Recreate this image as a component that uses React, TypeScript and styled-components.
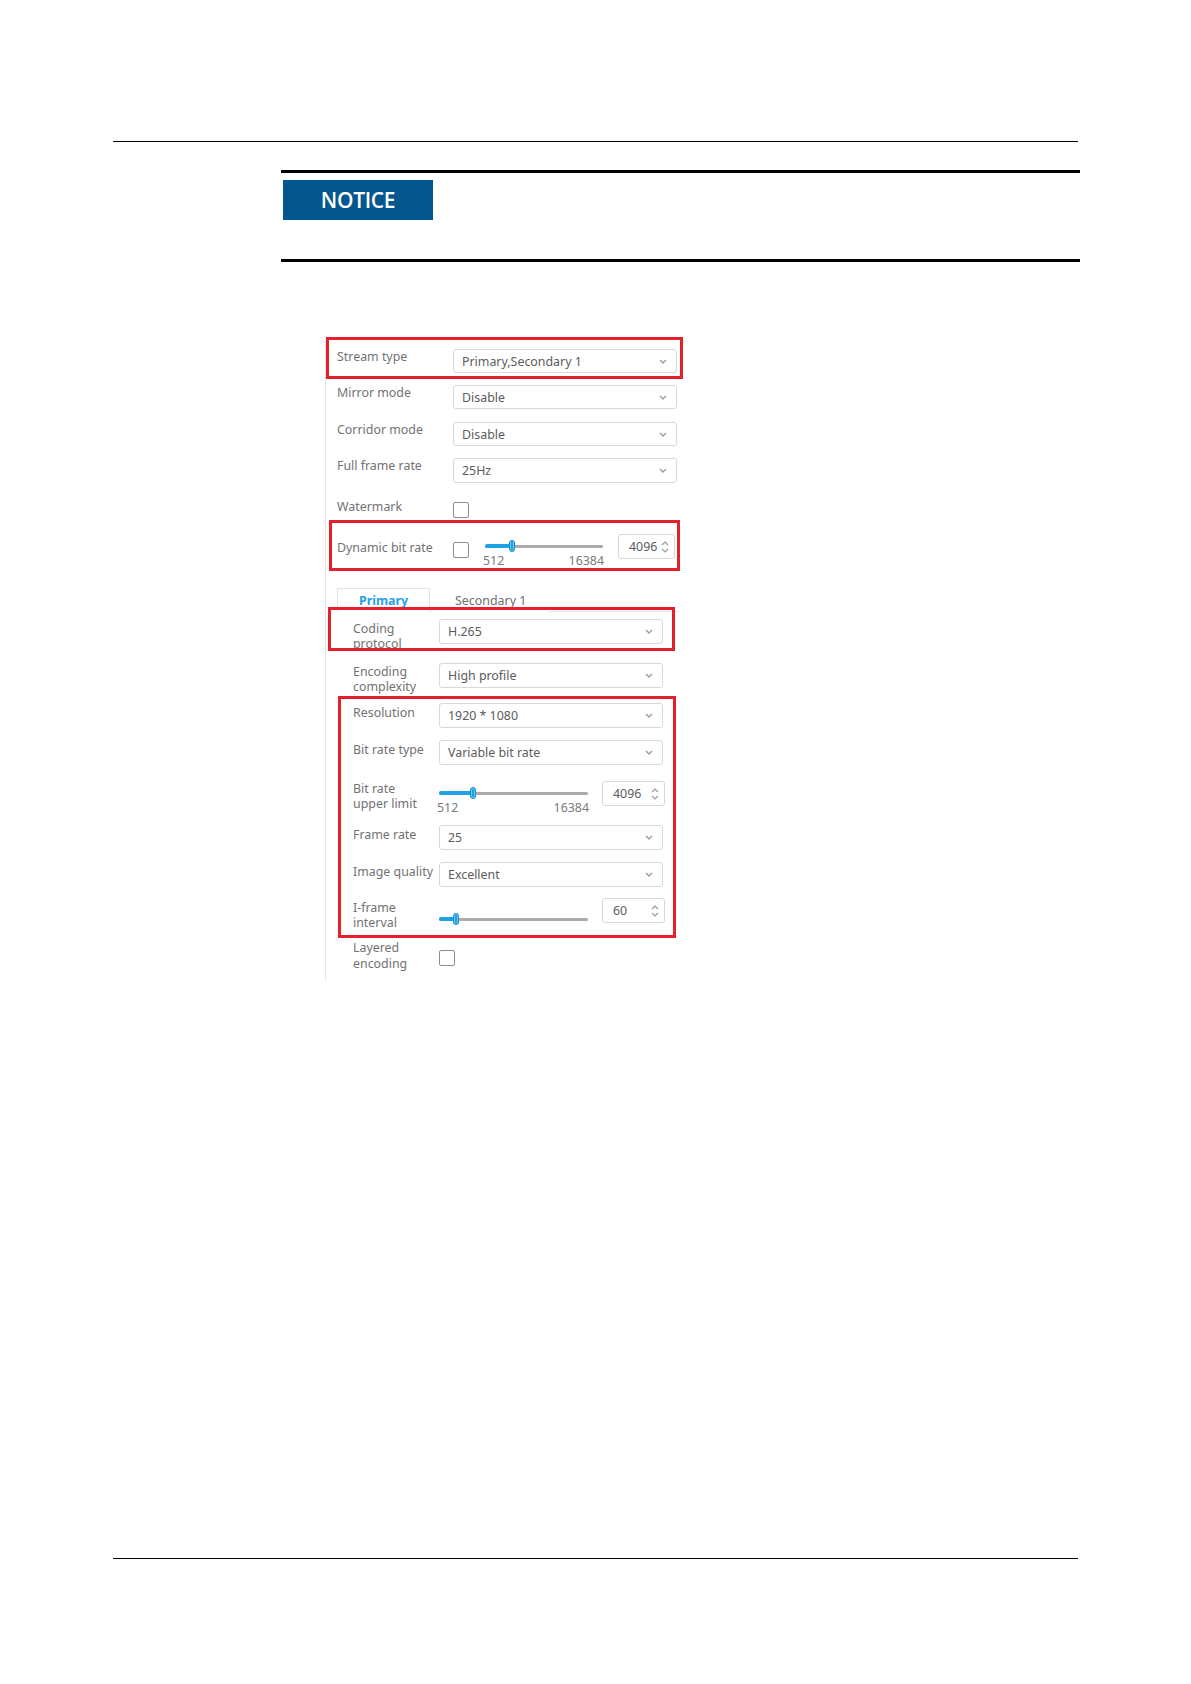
import styled, { createGlobalStyle } from 'styled-components'

const GlobalStyle = createGlobalStyle`
    html, body {
        margin: 0;
        padding: 0;
        background: #fff;
    }
    body {
        font-family: 'Noto Sans', 'Open Sans', sans-serif;
    }
`

const Page = styled.div`
    width: 1191px;
    min-height: 1684px;
    display: flex;
    flex-direction: column;
    background: #fff;
`

const HeaderRule = styled.div`
    margin: 141px 0 0 113px;
    width: 965px;
    border-top: 1px solid #000;
`

const FooterRule = styled.div`
    margin: auto 0 125px 113px;
    width: 965px;
    border-top: 1px solid #000;
`

const Notice = styled.section`
    margin: 28px 0 0 281px;
    width: 797px;
    border-top: 3px solid #000;
    border-bottom: 3px solid #000;
    padding: 7px 0 39px 2px;
`

const NoticeTag = styled.div`
    width: 150px;
    height: 40px;
    background: #04568f;
    color: #fff;
    font-family: 'Open Sans', 'Noto Sans', sans-serif;
    font-size: 21px;
    font-weight: 600;
    letter-spacing: -0.3px;
    display: flex;
    align-items: center;
    justify-content: center;
`

/* screenshot of the encoder settings */
const Figure = styled.div`
    position: relative;
    margin: 75px 0 0 325px;
    width: 360px;
`

const Panel = styled.div`
    border-left: 1px solid #e6e6e6;
    padding: 12px 0 0 11px;
    height: 643px;
    box-sizing: border-box;
    font-size: 12.4px;
`

const Row = styled.div<{ $h: number }>`
    display: flex;
    align-items: flex-start;
    height: ${({ $h }) => $h}px;
`

const Label = styled.div<{ $w: number; $pt?: number; $lh?: number }>`
    width: ${({ $w }) => $w}px;
    flex: none;
    padding-top: ${({ $pt }) => $pt ?? 0}px;
    line-height: ${({ $lh }) => $lh ?? 16}px;
    color: #727272;
    white-space: nowrap;
`

const SelectBox = styled.div<{ $h?: number }>`
    width: 224px;
    height: ${({ $h }) => $h ?? 25}px;
    box-sizing: border-box;
    border: 1px solid #d8d8d8;
    border-radius: 3px;
    display: flex;
    align-items: center;
    justify-content: space-between;
    padding: 0 9px 0 8px;
    color: #5c5c5c;
    background: #fff;
`

const CheckBox = styled.div<{ $mt: number }>`
    width: 16px;
    height: 16px;
    box-sizing: border-box;
    margin-top: ${({ $mt }) => $mt}px;
    border: 1px solid #8c8c8c;
    border-radius: 2px;
    flex: none;
`

const SliderWrap = styled.div<{ $w: number; $mt: number; $ml?: number }>`
    width: ${({ $w }) => $w}px;
    margin-top: ${({ $mt }) => $mt}px;
    margin-left: ${({ $ml }) => $ml ?? 0}px;
    flex: none;
`

const Track = styled.div`
    position: relative;
    height: 12px;
`

const Rail = styled.div`
    position: absolute;
    left: 0;
    right: 0;
    top: 5px;
    height: 3px;
    background: #ababab;
    border-radius: 2px;
`

const Fill = styled.div`
    position: absolute;
    left: 0;
    top: 4px;
    height: 4px;
    background: #1ea1e6;
    border-radius: 2px;
`

const Thumb = styled.div`
    position: absolute;
    top: 0;
    width: 6px;
    height: 12px;
    box-sizing: border-box;
    transform: translateX(-50%);
    background: #1ea1e6;
    border: 1px solid #1690d4;
    border-radius: 3px;
    box-shadow: inset 0 0 0 1px #6cc6f2;
`

const Ticks = styled.div`
    display: flex;
    justify-content: space-between;
    margin: 2px -1px 0 -2px;
    line-height: 14px;
    color: #7a7a7a;
`

const NumberBox = styled.div<{ $w: number; $ml: number }>`
    width: ${({ $w }) => $w}px;
    height: 25px;
    box-sizing: border-box;
    margin-left: ${({ $ml }) => $ml}px;
    border: 1px solid #d8d8d8;
    border-radius: 3px;
    display: flex;
    align-items: center;
    padding: 0 5px 0 10px;
    color: #5c5c5c;
    flex: none;

    svg {
        margin-left: auto;
    }
`

const TabSection = styled.div`
    margin-top: 0;
`

const TabBar = styled.div`
    display: flex;
    gap: 3px;
    height: 23px;
    border-bottom: 1px solid #e8e8e8;
    margin-right: 6px;
`

const Tab = styled.div<{ $active?: boolean }>`
    padding: 0 21px;
    display: flex;
    align-items: center;
    box-sizing: border-box;
    height: 24px;
    background: #fff;
    border: 1px solid ${({ $active }) => ($active ? '#e3e3e3' : 'transparent')};
    border-bottom: none;
    color: ${({ $active }) => ($active ? '#22a2e8' : '#6e6e6e')};
    font-weight: ${({ $active }) => ($active ? 700 : 400)};
`

const TabBody = styled.div`
    padding: 7px 0 0 16px;
`

const Callout = styled.div<{ $x: number; $y: number; $w: number; $h: number }>`
    position: absolute;
    left: ${({ $x }) => $x}px;
    top: ${({ $y }) => $y}px;
    width: ${({ $w }) => $w}px;
    height: ${({ $h }) => $h}px;
    box-sizing: border-box;
    border: 3px solid #e3202c;
    pointer-events: none;
`

const Chevron = () => (
    <svg width="8" height="5" viewBox="0 0 8 5">
        <polyline points="1,1 4,4 7,1" fill="none" stroke="#9a9a9a" strokeWidth="1.3" />
    </svg>
)

const Spinner = () => (
    <svg width="8" height="14" viewBox="0 0 8 14">
        <polyline points="1,5 4,2 7,5" fill="none" stroke="#9a9a9a" strokeWidth="1.2" />
        <polyline points="1,9 4,12 7,9" fill="none" stroke="#9a9a9a" strokeWidth="1.2" />
    </svg>
)

const Select = ({ value, h }: { value: string; h?: number }) => (
    <SelectBox $h={h}>
        <span>{value}</span>
        <Chevron />
    </SelectBox>
)

const Slider = ({
    w,
    mt,
    ml,
    pos,
    ticks,
}: {
    w: number
    mt: number
    ml?: number
    pos: number
    ticks?: boolean
}) => (
    <SliderWrap $w={w} $mt={mt} $ml={ml}>
        <Track>
            <Rail />
            <Fill style={{ width: `${pos * 100}%` }} />
            <Thumb style={{ left: `${pos * 100}%` }} />
        </Track>
        {ticks && (
            <Ticks>
                <span>512</span>
                <span>16384</span>
            </Ticks>
        )}
    </SliderWrap>
)

const Spin = ({ value, w, ml }: { value: string; w: number; ml: number }) => (
    <NumberBox $w={w} $ml={ml}>
        <span>{value}</span>
        <Spinner />
    </NumberBox>
)

const bitPos = (4096 - 512) / (16384 - 512)

export default function App() {
    return (
        <Page>
            <GlobalStyle />
            <HeaderRule />
            <Notice>
                <NoticeTag>NOTICE</NoticeTag>
            </Notice>

            <Figure>
                <Panel>
                    <Row $h={36}>
                        <Label $w={116}>Stream type</Label>
                        <Select value="Primary,Secondary 1" h={24} />
                    </Row>
                    <Row $h={37}>
                        <Label $w={116}>Mirror mode</Label>
                        <Select value="Disable" h={24} />
                    </Row>
                    <Row $h={36}>
                        <Label $w={116}>Corridor mode</Label>
                        <Select value="Disable" h={24} />
                    </Row>
                    <Row $h={41}>
                        <Label $w={116}>Full frame rate</Label>
                        <Select value="25Hz" h={25} />
                    </Row>
                    <Row $h={35}>
                        <Label $w={116}>Watermark</Label>
                        <CheckBox $mt={3} />
                    </Row>
                    <Row $h={54}>
                        <Label $w={116} $pt={6}>
                            Dynamic bit rate
                        </Label>
                        <CheckBox $mt={8} />
                        <Slider w={118} mt={6} ml={16} pos={bitPos} ticks />
                        <Spin value="4096" w={57} ml={15} />
                    </Row>

                    <TabSection>
                        <TabBar>
                            <Tab $active>Primary</Tab>
                            <Tab>Secondary 1</Tab>
                        </TabBar>
                        <TabBody>
                            <Row $h={44}>
                                <Label $w={86} $pt={2} $lh={15}>
                                    Coding
                                    <br />
                                    protocol
                                </Label>
                                <Select value="H.265" />
                            </Row>
                            <Row $h={40}>
                                <Label $w={86} $pt={1} $lh={15}>
                                    Encoding
                                    <br />
                                    complexity
                                </Label>
                                <Select value="High profile" />
                            </Row>
                            <Row $h={37}>
                                <Label $w={86} $pt={2} $lh={15}>
                                    Resolution
                                </Label>
                                <Select value="1920 * 1080" />
                            </Row>
                            <Row $h={41}>
                                <Label $w={86} $pt={2} $lh={15}>
                                    Bit rate type
                                </Label>
                                <Select value="Variable bit rate" />
                            </Row>
                            <Row $h={44}>
                                <Label $w={86} $pt={0} $lh={15}>
                                    Bit rate
                                    <br />
                                    upper limit
                                </Label>
                                <Slider w={149} mt={6} pos={bitPos} ticks />
                                <Spin value="4096" w={63} ml={14} />
                            </Row>
                            <Row $h={37}>
                                <Label $w={86} $pt={2} $lh={15}>
                                    Frame rate
                                </Label>
                                <Select value="25" />
                            </Row>
                            <Row $h={36}>
                                <Label $w={86} $pt={2} $lh={15}>
                                    Image quality
                                </Label>
                                <Select value="Excellent" />
                            </Row>
                            <Row $h={42}>
                                <Label $w={86} $pt={2} $lh={15}>
                                    I-frame
                                    <br />
                                    interval
                                </Label>
                                <Slider w={149} mt={15} pos={0.114} />
                                <Spin value="60" w={63} ml={14} />
                            </Row>
                            <Row $h={40}>
                                <Label $w={86} $pt={0} $lh={16}>
                                    Layered
                                    <br />
                                    encoding
                                </Label>
                                <CheckBox $mt={10} />
                            </Row>
                        </TabBody>
                    </TabSection>
                </Panel>

                <Callout $x={1} $y={0} $w={357} $h={42} />
                <Callout $x={4} $y={183} $w={351} $h={51} />
                <Callout $x={3} $y={270} $w={347} $h={44} />
                <Callout $x={13} $y={359} $w={338} $h={242} />
            </Figure>

            <FooterRule />
        </Page>
    )
}
